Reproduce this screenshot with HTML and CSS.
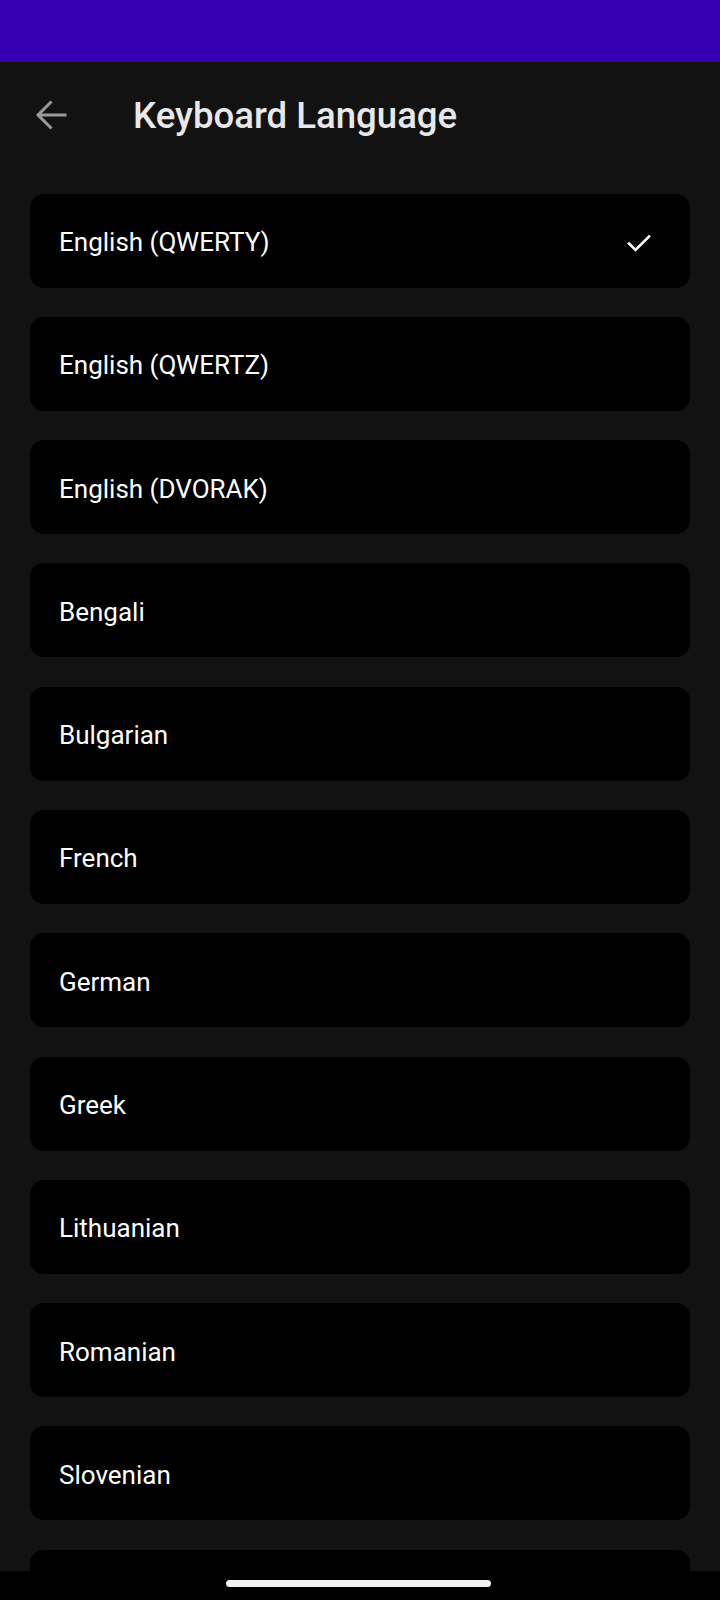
FILE: index.html
```html
<!DOCTYPE html>
<html lang="en">
<head>
<meta charset="utf-8">
<title>Keyboard Language</title>
<link rel="stylesheet" href="styles.css">
</head>
<body>
<div class="screen">
  <div class="status-bar"></div>
  <header class="app-bar">
    <button class="back" aria-label="Back">
      <svg width="34" height="34" viewBox="0 0 34 34" fill="none" stroke="currentColor" stroke-width="3" stroke-linecap="square" stroke-linejoin="miter">
        <path d="M31 17H4.5M16.5 4.5L4 17l12.5 12.5"/>
      </svg>
    </button>
    <h1 class="title">Keyboard Language</h1>
  </header>
  <main class="list">
    <div class="item"><span class="label">English (QWERTY)</span>
      <svg class="check" width="26" height="22" viewBox="0 0 26 22" fill="none" stroke="currentColor" stroke-width="2.6" stroke-linecap="square">
        <path d="M3 12.5l6.5 6.5L23 5.5"/>
      </svg>
    </div>
    <div class="item"><span class="label">English (QWERTZ)</span></div>
    <div class="item"><span class="label">English (DVORAK)</span></div>
    <div class="item"><span class="label">Bengali</span></div>
    <div class="item"><span class="label">Bulgarian</span></div>
    <div class="item"><span class="label">French</span></div>
    <div class="item"><span class="label">German</span></div>
    <div class="item"><span class="label">Greek</span></div>
    <div class="item"><span class="label">Lithuanian</span></div>
    <div class="item"><span class="label">Romanian</span></div>
    <div class="item"><span class="label">Slovenian</span></div>
    <div class="item"></div>
  </main>
  <div class="nav-bar"><div class="home-indicator"></div></div>
</div>
</body>
</html>
```

FILE: styles.css
```css
* { box-sizing: border-box; }
html, body {
  margin: 0;
  padding: 0;
  background: #121212;
}
.screen {
  width: 720px;
  height: 1600px;
  display: flex;
  flex-direction: column;
  overflow: hidden;
  font-family: Roboto, "Noto Sans", sans-serif;
  background: #121212;
}
.status-bar {
  height: 62px;
  flex: none;
  background: #3700b3;
}
.app-bar {
  height: 106px;
  flex: none;
  display: flex;
  align-items: center;
  padding-left: 34px;
}
.back {
  width: 34px;
  height: 34px;
  padding: 0;
  border: 0;
  background: none;
  color: #9a9a9a;
  display: flex;
  align-items: center;
  justify-content: center;
}
.back svg { display: block; }
.title {
  margin: 0 0 0 65px;
  font-size: 36.6px;
  font-weight: 500;
  color: #e8e8e8;
  letter-spacing: 0;
}
.list {
  flex: 1;
  min-height: 0;
  overflow: hidden;
  padding: 25.5px 30px 0;
  display: flex;
  flex-direction: column;
  gap: 29.3px;
}
.item {
  flex: none;
  height: 94px;
  background: #000;
  border-radius: 14px;
  display: flex;
  align-items: center;
  justify-content: space-between;
  padding: 3px 38px 0 29px;
}
.label {
  font-size: 26px;
  color: #ffffff;
}
.check {
  color: #ffffff;
  display: block;
}
.nav-bar {
  height: 29px;
  flex: none;
  background: #000;
  display: flex;
  justify-content: center;
  padding-top: 9px;
}
.home-indicator {
  width: 265px;
  height: 7px;
  margin-right: 4px;
  border-radius: 4px;
  background: #f2f2f2;
}
```
